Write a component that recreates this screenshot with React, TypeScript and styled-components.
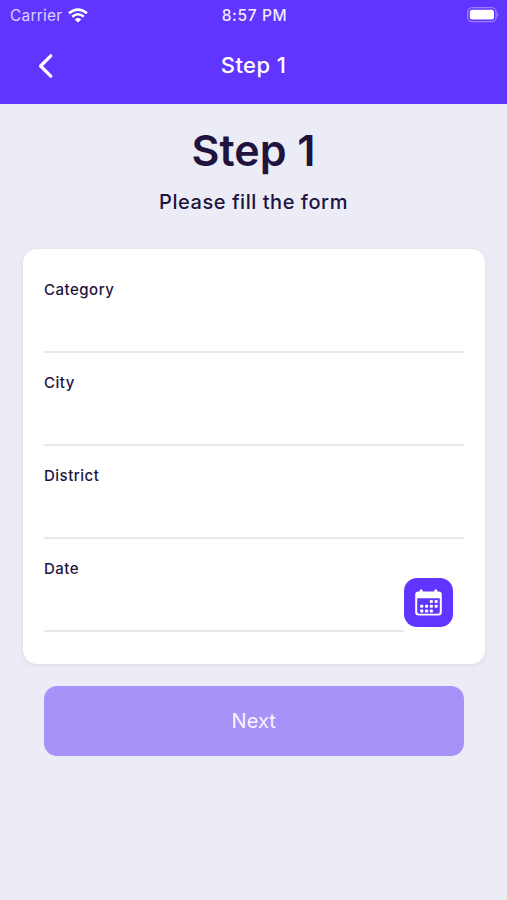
import React from "react";
import styled, { createGlobalStyle } from "styled-components";

const GlobalStyle = createGlobalStyle`
  *, *::before, *::after { box-sizing: border-box; }
  body { margin: 0; background: #ececf6; }
`;

const Screen = styled.div`
  display: flex;
  flex-direction: column;
  width: 100%;
  height: 900px;
  background: #ececf6;
  color: #20143f;
  font-family: Inter, "Open Sans", sans-serif;
`;

const Header = styled.header`
  height: 103.5px;
  flex: none;
  background: #6035ff;
  color: #fff;
`;

const StatusBar = styled.div`
  display: grid;
  grid-template-columns: 1fr auto 1fr;
  align-items: center;
  height: 29px;
  padding: 0 8px 0 10px;
  font-size: 15.5px;
  line-height: 29px;
`;

const Carrier = styled.div`
  display: flex;
  align-items: center;
  gap: 6px;
  color: #dcd2ff;
  letter-spacing: 0.2px;
`;

const Clock = styled.time`
  padding-top: 1px;
  color: #f0ebff;
  font-weight: 500;
  letter-spacing: 0.65px;
`;

const BatteryIcon = styled.svg`
  justify-self: end;
`;

const NavBar = styled.nav`
  display: grid;
  grid-template-columns: 1fr auto 1fr;
  align-items: center;
  height: 73px;
  padding: 0 37px;
`;

const BackButton = styled.button`
  display: flex;
  width: 18px;
  padding: 0;
  border: 0;
  background: none;
  color: inherit;
`;

const NavTitle = styled.span`
  padding-bottom: 2px;
  font-size: 22px;
  font-weight: 500;
  letter-spacing: 0.4px;
`;

const Intro = styled.section`
  display: flex;
  flex-direction: column;
  align-items: center;
  height: 145.5px;
  padding-top: 20px;
`;

const Title = styled.h1`
  margin: 0;
  font-size: 43px;
  font-weight: 600;
  line-height: 52px;
  letter-spacing: 0;
`;

const Subtitle = styled.p`
  margin: 12px 0 0;
  font-size: 20px;
  font-weight: 500;
  line-height: 28px;
  letter-spacing: 0.55px;
`;

const Card = styled.form`
  height: 415px;
  flex: none;
  margin: 0 22px 0 23px;
  padding: 11px 21px 0;
  border-radius: 14px;
  background: #fff;
  box-shadow: 0 1px 5px rgba(40, 30, 60, 0.09);
`;

const Row = styled.div`
  display: flex;
  height: 93px;
`;

const Field = styled.label`
  flex: 1;
  border-bottom: 2px solid #e8e7ed;
  padding-top: 20px;
  font-size: 15px;
  font-weight: 500;
  line-height: 20px;
  letter-spacing: 0.5px;
`;

const DateButton = styled.button`
  display: flex;
  align-items: center;
  justify-content: center;
  width: 49px;
  height: 49px;
  margin: 39px 11px 0 0;
  padding: 0;
  border: 0;
  border-radius: 13px;
  background: #6035ff;
`;

const NextButton = styled.button`
  height: 70px;
  flex: none;
  margin: 22px 43.5px 0 44px;
  padding: 0;
  border: 0;
  border-radius: 13px;
  background: #a792fa;
  color: #f8f5ff;
  font: 400 20px/70px Inter, sans-serif;
  letter-spacing: 0.1px;
`;

const dots = [
  [14.8, 12.6], [19.6, 12.6],
  [5.2, 17.3], [10, 17.3], [14.8, 17.3], [19.6, 17.3],
  [5.2, 22], [10, 22], [14.8, 22],
];

export default function App() {
  return (
    <Screen>
      <GlobalStyle />
      <Header>
        <StatusBar>
          <Carrier>
            <span>Carrier</span>
            <svg width="20" height="15" viewBox="0 0 20 15" fill="none" stroke="#fff" strokeWidth="2.6">
              <path d="M1 5.3Q10-2.2 19 5.3M4.2 8.7Q10 3.8 15.8 8.7" />
              <path d="M6.8 11.4Q10 8.5 13.2 11.4L10 14.6Z" fill="#fff" stroke="none" />
            </svg>
          </Carrier>
          <Clock>8:57 PM</Clock>
          <BatteryIcon width="32" height="16" viewBox="0 0 32 16">
            <rect x=".7" y=".7" width="28.4" height="14" rx="4.5" fill="none" stroke="#9b80ff" strokeWidth="1.3" />
            <rect x="2.8" y="2.8" width="24.2" height="9.8" rx="2.5" fill="#fff" />
            <path d="M30.2 5.5Q32.4 7.7 30.2 10Z" fill="#9b80ff" />
          </BatteryIcon>
        </StatusBar>
        <NavBar>
          <BackButton type="button" aria-label="Back">
            <svg width="18" height="26" viewBox="0 0 18 26" fill="none" stroke="#fff" strokeWidth="3.2" strokeLinecap="round" strokeLinejoin="round">
              <path d="M13.8 2.8L3.6 13l10.2 10.2" />
            </svg>
          </BackButton>
          <NavTitle>Step 1</NavTitle>
        </NavBar>
      </Header>
      <Intro>
        <Title>Step 1</Title>
        <Subtitle>Please fill the form</Subtitle>
      </Intro>
      <Card>
        <Row><Field>Category</Field></Row>
        <Row><Field>City</Field></Row>
        <Row><Field>District</Field></Row>
        <Row>
          <Field>Date</Field>
          <DateButton type="button" aria-label="Choose date">
            <svg width="27" height="27" viewBox="0 0 27 27">
              <path d="M3.5 2.5h1.2V1.8a1.5 1.5 0 0 1 3 0v.7h11.6v-.7a1.5 1.5 0 0 1 3 0v.7h1.2A3.3 3.3 0 0 1 26.8 5.8v17.4a3.3 3.3 0 0 1-3.3 3.3h-20A3.3 3.3 0 0 1 .2 23.2V5.8A3.3 3.3 0 0 1 3.5 2.5Z" fill="#fff" />
              <path d="M2.2 9.2h22.6v13.6a1.9 1.9 0 0 1-1.9 1.9H4.1a1.9 1.9 0 0 1-1.9-1.9Z" fill="#6035ff" />
              {dots.map(([x, y]) => (
                <rect key={`${x}-${y}`} x={x} y={y - 1.6} width="3.1" height="3.1" rx=".8" fill="#fff" />
              ))}
            </svg>
          </DateButton>
        </Row>
      </Card>
      <NextButton type="button">Next</NextButton>
    </Screen>
  );
}
